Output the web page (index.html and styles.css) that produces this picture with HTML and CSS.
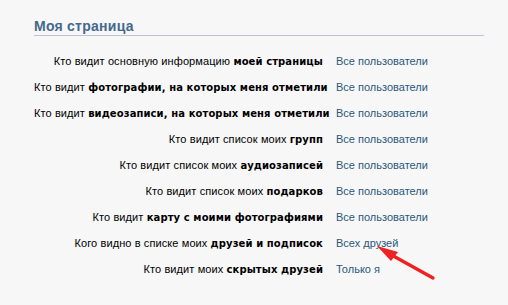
FILE: index.html
```html
<!DOCTYPE html>
<html lang="ru">
<head>
<meta charset="utf-8">
<link rel="stylesheet" href="styles.css">
</head>
<body>
<div class="page">
  <h2 class="section-title">Моя страница</h2>
  <div class="rows">
    <div class="row"><div class="label">Кто видит основную информацию <b>моей страницы</b></div><div class="value">Все пользователи</div></div>
    <div class="row"><div class="label">Кто видит <b>фотографии, на которых меня отметили</b></div><div class="value">Все пользователи</div></div>
    <div class="row"><div class="label">Кто видит <b>видеозаписи, на которых меня отметили</b></div><div class="value">Все пользователи</div></div>
    <div class="row"><div class="label">Кто видит список моих <b>групп</b></div><div class="value">Все пользователи</div></div>
    <div class="row"><div class="label">Кто видит список моих <b>аудиозаписей</b></div><div class="value">Все пользователи</div></div>
    <div class="row"><div class="label">Кто видит список моих <b>подарков</b></div><div class="value">Все пользователи</div></div>
    <div class="row"><div class="label">Кто видит <b>карту с моими фотографиями</b></div><div class="value">Все пользователи</div></div>
    <div class="row"><div class="label">Кого видно в списке моих <b>друзей и подписок</b></div><div class="value">Всех друзей</div></div>
    <div class="row"><div class="label">Кто видит моих <b>скрытых друзей</b></div><div class="value">Только я</div></div>
  </div>
  <h2 class="section-title next">Другое</h2>
  <svg class="arrow" width="72" height="48" viewBox="0 0 72 48">
    <line x1="18" y1="17" x2="63" y2="42" stroke="#ee2222" stroke-width="3.4" stroke-linecap="round"/>
    <polygon points="7,10 28,16 21,25" fill="#ee2222"/>
  </svg>
</div>
</body>
</html>
```
FILE: styles.css
```css
html, body {
  margin: 0;
  padding: 0;
  background: #f7f7f7;
}
body {
  font-family: "Liberation Sans", Arial, sans-serif;
  font-size: 11px;
  color: #000;
}
.page {
  position: relative;
  width: 450px;
  padding: 18px 0 0 34px;
}
.section-title {
  margin: 0;
  font-family: "Liberation Sans", Arial, sans-serif;
  font-size: 14px;
  letter-spacing: 0.25px;
  font-weight: bold;
  color: #45688e;
  line-height: 16px;
  padding: 0 0 1px 0;
  border-bottom: 1px solid #b9c4da;
}
.rows {
  display: flex;
  flex-direction: column;
  padding-top: 12px;
}
.row {
  display: grid;
  grid-template-columns: 289px auto;
  column-gap: 13px;
  height: 26px;
  align-items: center;
}
.label {
  text-align: right;
  white-space: nowrap;
  letter-spacing: 0.1px;
}
.label b {
  font-family: "DejaVu Sans", Verdana, sans-serif;
  font-size: 10px;
  font-weight: bold;
  letter-spacing: 0.1px;
}
.value {
  color: #2b587a;
  white-space: nowrap;
}
.section-title.next {
  margin-top: 20px;
}
.arrow {
  position: absolute;
  left: 370px;
  top: 236px;
}
```
